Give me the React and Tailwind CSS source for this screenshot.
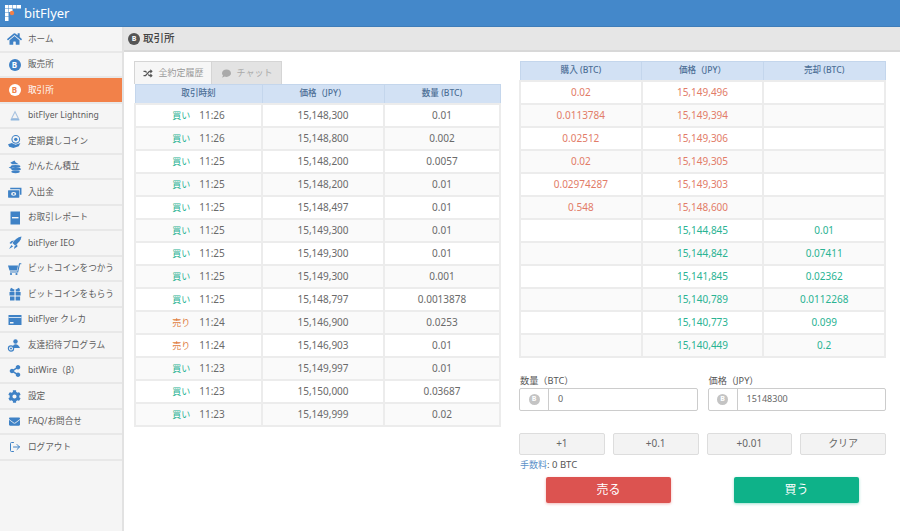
import { FaHome, FaShareAlt, FaCog, FaEnvelope, FaRandom, FaComment } from 'react-icons/fa'
import { LogOut } from 'lucide-react'

const font = 'font-["Noto_Sans","Noto_Sans_CJK_JP",sans-serif]'
const blue = '#3f82c6'

function BtcDot({ className }) {
  return (
    <span className={`flex items-center justify-center rounded-full font-bold ${className}`}>B</span>
  )
}

function Glyph({ w = 14, h = 14, children }) {
  return (
    <svg viewBox="0 0 14 14" width={w} height={h} fill={blue}>
      {children}
    </svg>
  )
}

const navItems = [
  { label: 'ホーム', icon: <FaHome className="w-[15px] h-[14px] text-[#3f82c6]" /> },
  { label: '販売所', icon: <BtcDot className="w-[12px] h-[12px] bg-[#3f82c6] text-white text-[8px]" /> },
  { label: '取引所', active: true, icon: <BtcDot className="w-[12px] h-[12px] bg-white text-[#f28149] text-[8px]" /> },
  {
    label: 'bitFlyer Lightning',
    icon: (
      <Glyph w={12} h={12}>
        <path d="M7 2 L11 10 H3 Z" fill="none" stroke="#a9c3e0" strokeWidth="1.3" />
        <path d="M2 11.5 H12" stroke="#6a9fd4" strokeWidth="1.2" />
      </Glyph>
    ),
  },
  {
    label: '定期貸しコイン',
    icon: (
      <Glyph w={15} h={15}>
        <circle cx="8.2" cy="5" r="3.6" fill="none" stroke={blue} strokeWidth="1" />
        <circle cx="8.2" cy="5" r="1.6" />
        <path d="M1 9.5 L4.5 8.5 L8 10 L12.5 8.5 L11 11.5 L6 13 L2 12 Z" />
      </Glyph>
    ),
  },
  {
    label: 'かんたん積立',
    icon: (
      <Glyph w={15} h={15}>
        <path d="M3 3.5 L7 1.5 L8 3 L11 5 H5 Z" />
        <ellipse cx="8" cy="7" rx="4.5" ry="1.3" />
        <ellipse cx="8.5" cy="9.5" rx="4.5" ry="1.3" />
        <ellipse cx="8" cy="12" rx="4" ry="1.3" />
        <path d="M1.5 8 L5 6.5 L5 9.5 Z" />
      </Glyph>
    ),
  },
  {
    label: '入出金',
    icon: (
      <Glyph w={15} h={15}>
        <path d="M3 2.5 H13.5 V9 H12 V4 H3 Z" />
        <rect x="1" y="4.8" width="10.5" height="7" rx="0.5" />
        <ellipse cx="6.2" cy="8.3" rx="2.4" ry="1.7" fill="#f5f5f5" />
        <circle cx="6.2" cy="8.3" r="0.9" />
      </Glyph>
    ),
  },
  {
    label: 'お取引レポート',
    icon: (
      <Glyph w={14} h={14}>
        <rect x="2.5" y="0.5" width="9.5" height="13" />
        <rect x="4" y="6" width="6.5" height="1.4" fill="#f5f5f5" />
      </Glyph>
    ),
  },
  {
    label: 'bitFlyer IEO',
    icon: (
      <Glyph w={14} h={14}>
        <path d="M13.5 0.5 C9.5 1 7 3.5 4.5 7 L7 9.5 C10.5 7 13 4.5 13.5 0.5 Z" />
        <path d="M3.5 5 L6 4.5 L3 8 L1.5 7 Z" />
        <path d="M9 8 L9.5 10.5 L6 13 L6.5 10.5 Z" />
        <path d="M3.5 9 L5 10.5 L1 13 Z" />
      </Glyph>
    ),
  },
  {
    label: 'ビットコインをつかう',
    icon: (
      <Glyph w={15} h={14}>
        <path d="M0.5 3.5 H10.5 L9.5 8.5 H2 Z" />
        <path d="M2.5 10 H10.2 L12 1.8 H13.8" fill="none" stroke={blue} strokeWidth="1.1" />
        <circle cx="3.5" cy="12" r="1.1" />
        <circle cx="9" cy="12" r="1.1" />
      </Glyph>
    ),
  },
  {
    label: 'ビットコインをもらう',
    icon: (
      <Glyph w={14} h={14}>
        <path d="M7 3 L3 0.8 L2 3 L2.5 4.4 H6.3 V3 Z" />
        <path d="M7 3 L11 0.8 L12 3 L11.5 4.4 H7.7 V3 Z" />
        <rect x="1.5" y="5" width="5" height="3.5" />
        <rect x="7.6" y="5" width="5" height="3.5" />
        <rect x="2" y="9.5" width="4.5" height="4" />
        <rect x="7.6" y="9.5" width="4.5" height="4" />
      </Glyph>
    ),
  },
  {
    label: 'bitFlyer クレカ',
    icon: (
      <Glyph w={14} h={14}>
        <rect x="0.5" y="2" width="13" height="10" />
        <rect x="0.5" y="4" width="13" height="1" fill="#cfe0f2" />
        <rect x="2" y="9" width="3.5" height="1.5" fill="#f5f5f5" />
      </Glyph>
    ),
  },
  {
    label: '友達招待プログラム',
    icon: (
      <Glyph w={15} h={14}>
        <circle cx="8" cy="3.5" r="2.2" />
        <path d="M5.2 10 C5.2 7 6.5 6.2 8 6.2 C10 6.2 11.5 7.5 12.5 10 Z" />
        <circle cx="3.5" cy="10.5" r="2.6" fill="none" stroke={blue} strokeWidth="1.2" />
        <circle cx="3.5" cy="10.5" r="1" />
      </Glyph>
    ),
  },
  { label: 'bitWire（β）', icon: <FaShareAlt className="w-[12px] h-[12px] text-[#3f82c6]" /> },
  { label: '設定', icon: <FaCog className="w-[13px] h-[13px] text-[#3f82c6]" /> },
  { label: 'FAQ/お問合せ', icon: <FaEnvelope className="w-[13px] h-[11px] text-[#3f82c6]" /> },
  { label: 'ログアウト', icon: <LogOut className="w-[12px] h-[12px] text-[#3f82c6]" strokeWidth={2} /> },
]

const trades = [
  ['買い', '11:26', '15,148,300', '0.01'],
  ['買い', '11:26', '15,148,800', '0.002'],
  ['買い', '11:25', '15,148,200', '0.0057'],
  ['買い', '11:25', '15,148,200', '0.01'],
  ['買い', '11:25', '15,148,497', '0.01'],
  ['買い', '11:25', '15,149,300', '0.01'],
  ['買い', '11:25', '15,149,300', '0.01'],
  ['買い', '11:25', '15,149,300', '0.001'],
  ['買い', '11:25', '15,148,797', '0.0013878'],
  ['売り', '11:24', '15,146,900', '0.0253'],
  ['売り', '11:24', '15,146,903', '0.01'],
  ['買い', '11:23', '15,149,997', '0.01'],
  ['買い', '11:23', '15,150,000', '0.03687'],
  ['買い', '11:23', '15,149,999', '0.02'],
]

const book = [
  ['0.02', '15,149,496', ''],
  ['0.0113784', '15,149,394', ''],
  ['0.02512', '15,149,306', ''],
  ['0.02', '15,149,305', ''],
  ['0.02974287', '15,149,303', ''],
  ['0.548', '15,148,600', ''],
  ['', '15,144,845', '0.01'],
  ['', '15,144,842', '0.07411'],
  ['', '15,141,845', '0.02362'],
  ['', '15,140,789', '0.0112268'],
  ['', '15,140,773', '0.099'],
  ['', '15,140,449', '0.2'],
]

function Th({ className = '', children }) {
  return (
    <th className={`h-[19px] p-0 border border-[#c4d6ec] bg-[#d2e1f4] text-[8.6px] font-medium text-[#4d6f96] text-center ${className}`}>
      {children}
    </th>
  )
}

function Logo() {
  return (
    <svg viewBox="0 0 16 16" className="w-[16px] h-[16px]">
      <path d="M0 0h3.5v3.5H0zM4 0h3.5v3.5H4zM8 0h3.5v3.5H8zM12 0h4v3.5h-4zM0 4h3.5v3.5H0zM4 4h3.5v3H4zM0 8h3.5v3.5H0zM0 12h3.5v4H0z" fill="#fff" />
      <circle cx="7" cy="8" r="2.2" fill="#f28149" />
    </svg>
  )
}

function Field({ label, value }) {
  return (
    <div className="flex-1">
      <div className="text-[9.2px] leading-[14px] text-[#555] pl-px">{label}</div>
      <div className="flex h-[23px] border border-[#ccc] rounded-[2px] bg-white">
        <div className="w-[29px] flex items-center justify-center border-r border-[#ccc]">
          <BtcDot className="w-[11px] h-[11px] bg-[#c4c4c4] text-white text-[7px]" />
        </div>
        <div className="pl-[9px] flex items-center text-[9px] text-[#666]">{value}</div>
      </div>
    </div>
  )
}

export default function App() {
  return (
    <div className={`w-[900px] h-[531px] overflow-hidden bg-white flex flex-col ${font}`}>
      <header className="h-[27px] shrink-0 bg-[#4488ca] flex items-center pl-[5px] gap-[3px] border-b border-[#3f7db9]">
        <Logo />
        <span className="text-white text-[13px] leading-none">bitFlyer</span>
      </header>
      <div className="flex flex-1 min-h-0">
        <aside className="w-[124px] shrink-0 bg-[#f5f5f5] border-r-2 border-[#e2e2e2]">
          {navItems.map((item) => (
            <div
              key={item.label}
              className={`h-[25.5px] pt-px flex items-center border-b-2 border-[#e8e8e8] ${item.active ? 'bg-[#f28149] text-white' : 'text-[#5c5c5c]'}`}
            >
              <span className="w-[28px] shrink-0 flex justify-center pl-[1px]">{item.icon}</span>
              <span className="text-[8.6px] whitespace-nowrap">{item.label}</span>
            </div>
          ))}
        </aside>
        <main className="flex-1 min-w-0">
          <div className="h-[25px] pt-px bg-[#e6e6e6] border-b-2 border-[#d8d8d8] flex items-center pl-[4px] gap-[3px]">
            <BtcDot className="w-[12px] h-[12px] bg-[#555] text-white text-[7px]" />
            <span className="text-[10.5px] font-medium text-[#444]">取引所</span>
          </div>
          <div className="flex pl-[10px] pt-[9px] gap-[20px]">
            <section className="w-[365px]">
              <div className="flex h-[23px] w-[148px] border border-b-0 border-[#d5d5d5] bg-[#e3e3e3]">
                <div className="w-[77px] bg-[#f6f6f6] border-r border-[#d5d5d5] flex items-center justify-center gap-[4px] text-[9px] text-[#999]">
                  <FaRandom className="w-[12px] h-[9px] text-[#555]" />
                  全約定履歴
                </div>
                <div className="flex-1 flex items-center justify-center gap-[5px] text-[9px] text-[#aaa]">
                  <FaComment className="w-[11px] h-[9px] text-[#aaa]" />
                  チャット
                </div>
              </div>
              <table className="w-full table-fixed border-collapse">
                <colgroup>
                  <col className="w-[127px]" />
                  <col className="w-[122px]" />
                  <col className="w-[116px]" />
                </colgroup>
                <thead>
                  <tr>
                    <Th>取引時刻</Th>
                    <Th>価格（JPY）</Th>
                    <Th>数量 (BTC)</Th>
                  </tr>
                </thead>
                <tbody>
                  {trades.map((t, i) => (
                    <tr key={i} className={`h-[23px] ${i % 2 ? 'bg-[#fafafa]' : 'bg-white'}`}>
                      <td className="p-0 border-2 border-[#ececec] text-center text-[10px] text-[#6a6a6a]">
                        <span className={`text-[9px] ${t[0] === '買い' ? 'text-[#2ab393]' : 'text-[#e0803f]'}`}>{t[0]}</span>
                        <span className="ml-[9px]">{t[1]}</span>
                      </td>
                      <td className="p-0 border-2 border-[#ececec] text-center text-[10px] text-[#6a6a6a]">{t[2]}</td>
                      <td className="p-0 border-2 border-[#ececec] text-center text-[10px] text-[#6a6a6a]">{t[3]}</td>
                    </tr>
                  ))}
                </tbody>
              </table>
            </section>
            <section className="w-[367px]">
              <table className="w-full table-fixed border-collapse">
                <thead>
                  <tr>
                    <Th>購入 (BTC)</Th>
                    <Th>価格（JPY）</Th>
                    <Th>売却 (BTC)</Th>
                  </tr>
                </thead>
                <tbody>
                  {book.map((r, i) => {
                    const color = i < 6 ? 'text-[#e27c68]' : 'text-[#2ab393]'
                    return (
                      <tr key={i} className={`h-[23px] ${i % 2 ? 'bg-[#fafafa]' : 'bg-white'}`}>
                        {r.map((v, j) => (
                          <td key={j} className={`p-0 border-2 border-[#ececec] text-center text-[10px] ${color}`}>{v}</td>
                        ))}
                      </tr>
                    )
                  })}
                </tbody>
              </table>
              <div className="flex gap-[10px] mt-[16px]">
                <Field label="数量（BTC）" value="0" />
                <Field label="価格（JPY）" value="15148300" />
              </div>
              <div className="grid grid-cols-4 gap-[8px] mt-[22px]">
                {['+1', '+0.1', '+0.01', 'クリア'].map((b) => (
                  <button key={b} className="h-[22px] border border-[#ddd] rounded-[2px] bg-[#f3f3f3] text-[10px] text-[#666]">{b}</button>
                ))}
              </div>
              <div className="mt-[3px] pl-px text-[9.5px] leading-[14px] text-[#555]">
                <span className="text-[#5a90c8] text-[9px]">手数料</span>: 0 BTC
              </div>
              <div className="flex justify-between px-[27px] mt-[5px]">
                <button className="w-[125px] h-[26px] rounded-[2px] bg-[#dc5350] text-white text-[12px] shadow-[0_1px_3px_rgba(220,83,80,0.4)]">売る</button>
                <button className="w-[125px] h-[26px] rounded-[2px] bg-[#0eb289] text-white text-[12px] shadow-[0_1px_3px_rgba(14,178,137,0.4)]">買う</button>
              </div>
            </section>
          </div>
        </main>
      </div>
    </div>
  )
}
